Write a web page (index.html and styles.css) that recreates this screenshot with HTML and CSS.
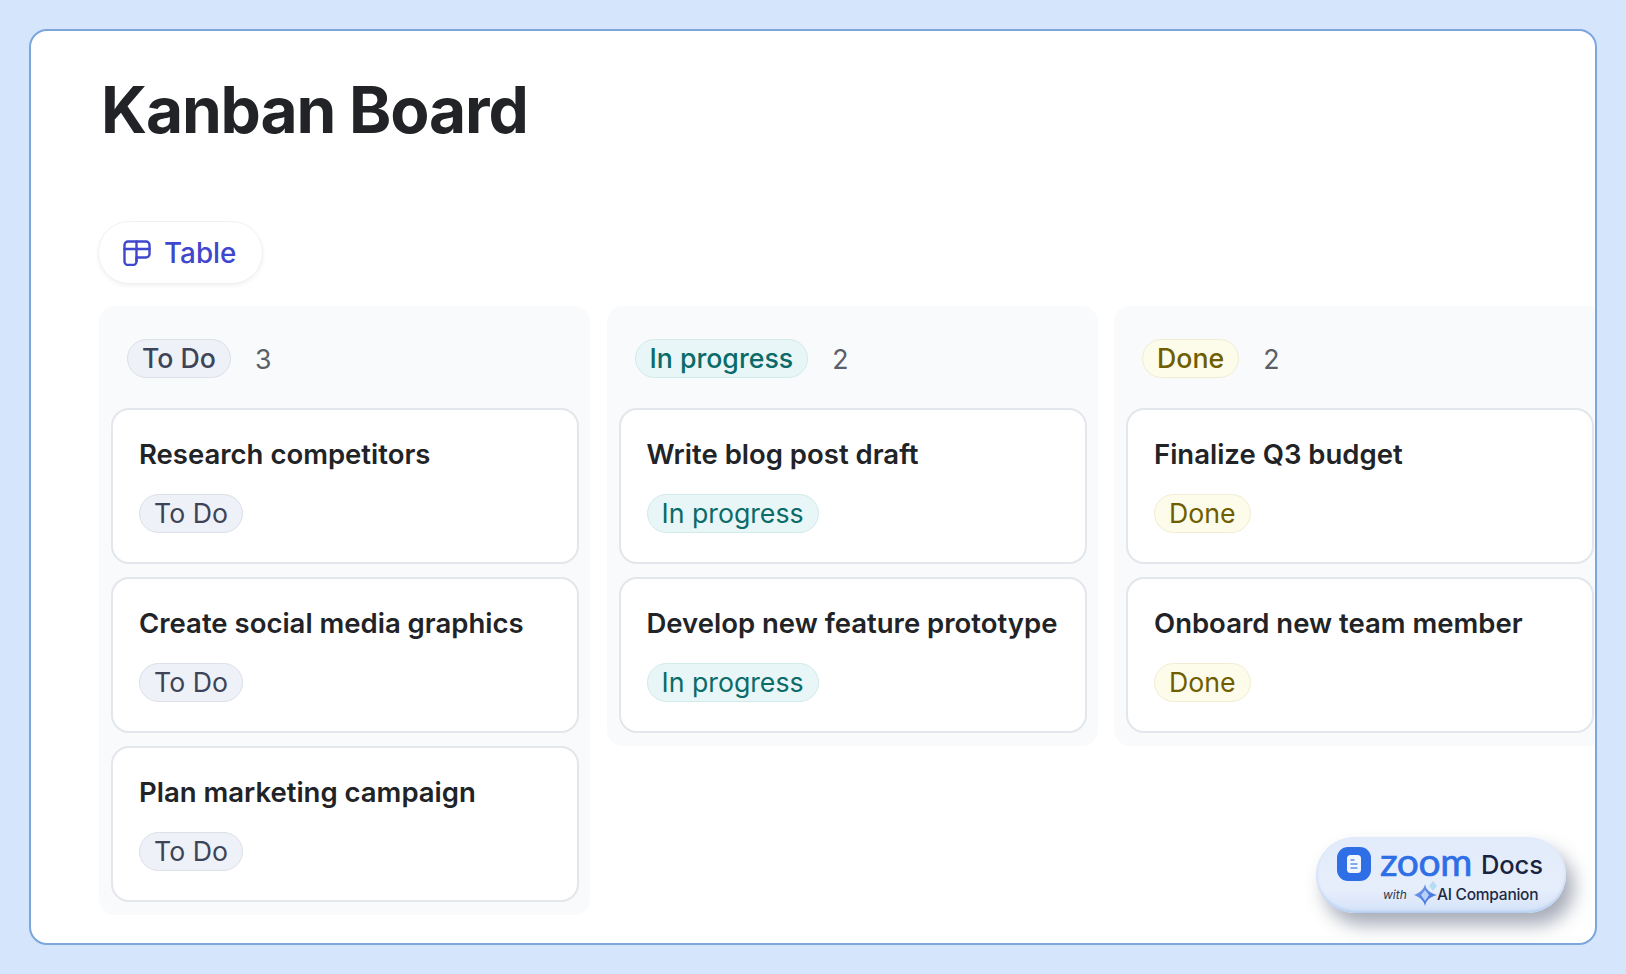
FILE: index.html
```html
<!DOCTYPE html>
<html lang="en">
<head>
<meta charset="utf-8">
<title>Kanban Board</title>
<link rel="stylesheet" href="styles.css">
</head>
<body>
<main class="frame">
  <h1 class="title">Kanban Board</h1>
  <div class="chip">
    <svg class="chip-icon" viewBox="0 0 28 26" fill="none" stroke="currentColor" stroke-width="2.4" stroke-linejoin="round" stroke-linecap="round"><path d="M5 1.5h18a3.5 3.5 0 0 1 3.5 3.5v9a3.5 3.5 0 0 1-3.5 3.5h-9.5v4a3.5 3.5 0 0 1-3.5 3.5H5a3.5 3.5 0 0 1-3.5-3.5V5A3.5 3.5 0 0 1 5 1.5Z"/><path d="M1.5 9h25M13.5 1.5V21"/></svg>
    <span>Table</span>
  </div>
  <section class="board">
    <div class="column">
      <header class="col-head"><span class="badge badge-head todo">To Do</span><span class="count">3</span></header>
      <div class="cards">
        <article class="card"><h2>Research competitors</h2><span class="badge todo">To Do</span></article>
        <article class="card"><h2>Create social media graphics</h2><span class="badge todo">To Do</span></article>
        <article class="card"><h2>Plan marketing campaign</h2><span class="badge todo">To Do</span></article>
      </div>
    </div>
    <div class="column">
      <header class="col-head"><span class="badge badge-head progress">In progress</span><span class="count">2</span></header>
      <div class="cards">
        <article class="card"><h2>Write blog post draft</h2><span class="badge progress">In progress</span></article>
        <article class="card"><h2>Develop new feature prototype</h2><span class="badge progress">In progress</span></article>
      </div>
    </div>
    <div class="column">
      <header class="col-head"><span class="badge badge-head done">Done</span><span class="count">2</span></header>
      <div class="cards">
        <article class="card"><h2>Finalize Q3 budget</h2><span class="badge done">Done</span></article>
        <article class="card"><h2>Onboard new team member</h2><span class="badge done">Done</span></article>
      </div>
    </div>
  </section>
  <aside class="logo">
    <div class="logo-top">
      <svg class="logo-icon" viewBox="0 0 34 34"><rect width="34" height="34" rx="11" fill="#2f6fe6"/><rect x="10" y="8" width="14" height="18" rx="3.5" fill="#f2f6fe"/><path d="M13.5 13h4M13.5 17h7M13.5 21h7" stroke="#5f8fe8" stroke-width="1.5" fill="none"/></svg>
      <span class="logo-zoom">zoom</span>
      <span class="logo-docs">Docs</span>
    </div>
    <div class="logo-bottom">
      <span class="logo-with">with</span>
      <svg class="logo-spark" viewBox="0 0 26 26"><defs><linearGradient id="spark" x1="0" y1="0" x2="1" y2="1"><stop offset="0" stop-color="#7fa4ee"/><stop offset="1" stop-color="#2f62d8"/></linearGradient></defs><path d="M11 3 C12 9 16 12 23 14 C16 16 12 19 11 25 C10 19 5 16 0 14 C5 12 10 9 11 3Z" fill="url(#spark)"/><path d="M11 9 L15 14 L11 20 L7 14Z" fill="#b9d0f8"/><path d="M19 0 L23 5 L19 10 L15 5Z" fill="#b5dcf5"/></svg>
      <span class="logo-ai">AI Companion</span>
    </div>
  </aside>
</main>
</body>
</html>
```

FILE: styles.css
```css
* { box-sizing: border-box; }
html, body { margin: 0; height: 100%; }
body {
  background: #d5e5fc;
  padding: 29px 29px 30px;
  font-family: Inter, "Liberation Sans", sans-serif;
  overflow: hidden;
}
.frame {
  position: relative;
  height: 916px;
  background: #fff;
  border: 2px solid #7ca6dc;
  border-radius: 18px;
  overflow: hidden;
  padding: 47px 0 0 68px;
}
.title {
  margin: 0 0 0 2px;
  font-size: 64px;
  line-height: 64px;
  font-weight: 700;
  letter-spacing: -1.15px;
  color: #212326;
}
.chip {
  display: inline-flex;
  align-items: center;
  gap: 13px;
  height: 63px;
  margin: 79px 0 0 -1px;
  padding: 0 26px 0 24px;
  border: 1.5px solid #f0f1f3;
  border-radius: 32px;
  background: #fff;
  box-shadow: 0 2px 4px rgba(30, 40, 60, .06);
  color: #3f47cc;
  font-size: 27.8px;
  font-weight: 500;
}
.chip-icon { width: 28px; height: 26px; }
.board {
  display: flex;
  align-items: flex-start;
  gap: 16.5px;
  margin-top: 22px;
}
.column {
  flex: 0 0 491px;
  padding: 33px 11px 13px 12px;
  background: #f8fafc;
  border-radius: 16px;
}
.col-head {
  display: flex;
  align-items: center;
  gap: 24px;
  padding-left: 16px;
  margin-bottom: 30px;
}
.count { font-size: 26.7px; color: #5a5f68; }
.cards { display: flex; flex-direction: column; gap: 13px; }
.card {
  height: 156px;
  padding: 25px 26px 0;
  background: #fff;
  border: 2px solid #e3e6ea;
  border-radius: 18px;
}
.card h2 {
  margin: 0 0 21px;
  font-size: 27.5px;
  line-height: 38px;
  font-weight: 600;
  color: #212326;
  white-space: nowrap;
}
.badge {
  display: inline-block;
  height: 39px;
  padding: 0 14px;
  border: 1.5px solid;
  border-radius: 20px;
  font-size: 26.7px;
  line-height: 36px;
  white-space: nowrap;
}
.badge-head { font-weight: 500; }
.todo { background: #eef1f7; border-color: #dce0e7; color: #3d4458; }
.progress { background: #e9f6f7; border-color: #d2eae8; color: #0a6b69; }
.done { background: #fdfbe9; border-color: #f1edd4; color: #6e5e00; }
.logo {
  position: absolute;
  left: 1285px;
  top: 806px;
  width: 250px;
  height: 76px;
  padding: 9px 0 0 21px;
  border-radius: 38px;
  background: linear-gradient(180deg, #e2ebfa, #e6eefb 70%, #d4e2f8);
  box-shadow: 8px 12px 18px rgba(60, 70, 100, .45), inset 0 -2px 3px rgba(160, 190, 235, .6);
}
.logo-top { display: flex; align-items: center; height: 36px; }
.logo-icon { width: 34px; height: 34px; flex: none; }
.logo-zoom {
  margin-left: 9px;
  font-family: Lato, sans-serif;
  font-size: 39px;
  line-height: 36px;
  letter-spacing: -.4px;
  color: #2f6fe6;
  font-weight: 400;
  -webkit-text-stroke: .7px #2f6fe6;
  transform: translateY(-3px);
}
.logo-docs {
  margin-left: 9px;
  font-size: 25.5px;
  font-weight: 500;
  letter-spacing: -.1px;
  color: #18233f;
}
.logo-bottom { display: flex; align-items: center; height: 26px; margin-top: -1px; padding-left: 46px; }
.logo-with {
  font-size: 12px;
  font-style: italic;
  color: #2c3850;
  width: 31px;
}
.logo-spark { width: 26px; height: 26px; flex: none; }
.logo-ai {
  margin-left: -3px;
  font-size: 15.5px;
  font-weight: 500;
  letter-spacing: -.25px;
  color: #1e2a44;
}
```
